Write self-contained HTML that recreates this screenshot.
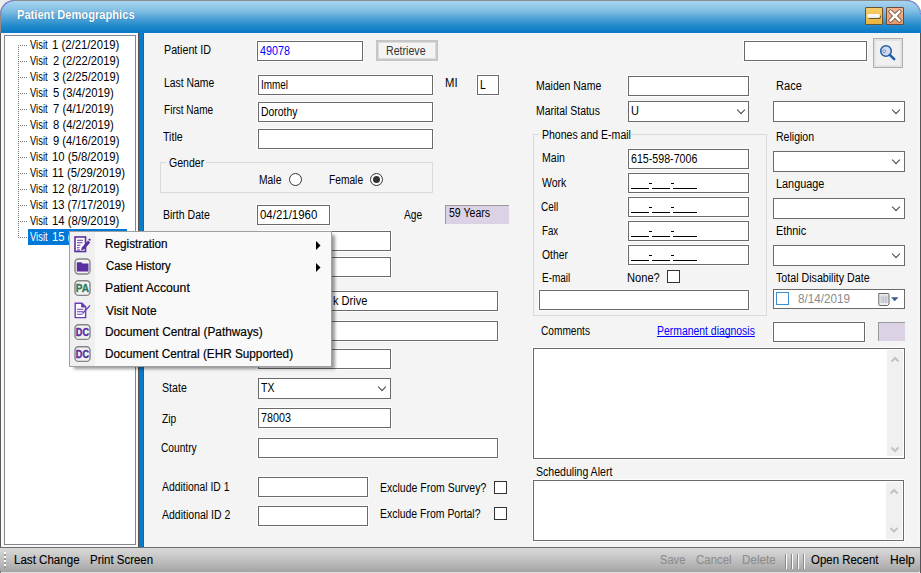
<!DOCTYPE html>
<html><head><meta charset="utf-8">
<style>
*{margin:0;padding:0;box-sizing:border-box}
html,body{width:921px;height:573px;overflow:hidden;background:#ececec;font-family:"Liberation Sans",sans-serif;font-size:12px;color:#000;position:relative}
.a{position:absolute}
.tx{position:absolute;white-space:pre;transform-origin:0 0}
.mtx{z-index:6;-webkit-text-stroke:0.18px #000}
.stx{-webkit-text-stroke:0.12px currentColor}
.ttl{text-shadow:0 0 1px rgba(20,60,100,.6)}
#win{left:0;top:20px;width:921px;height:553px;background:#f8f8f8;border-left:1px solid #5a5a5a;border-right:1px solid #555}

#title{left:0;top:0;width:921px;height:33px;border-left:1px solid #958a85;background:linear-gradient(#a6d5f0 0px,#96cae9 5px,#80bee3 10px,#5eabdb 15px,#3e9ad3 20px,#2189cb 25px,#0d7dc6 30px,#087ac5 32px);border-top:1px solid #8c8c8c;border-radius:14px 14px 0 0}
#tree{left:4px;top:35px;width:132px;height:510px;background:#fff;border:1px solid #828790}
#sepd{left:138px;top:33px;width:6px;height:514px;background:#555}
#sep{left:139px;top:33px;width:4px;height:514px;background:#0a79c8}
#form{left:144px;top:33px;width:775px;height:514px;background:#f4f4f4}
#status{left:0;top:547px;width:920px;height:26px;border-radius:0 0 3px 3px;background:linear-gradient(#d8d8d8 0,#d0d0d0 20%,#bababa 60%,#a4a4a4 95%,#dedede 96%);border-top:1px solid #6e6e6e}
.tb{position:absolute;background:#fff;border:1px solid #6a6a6a;box-shadow:0 0 0 1px #fdfdfd}
.cmb{position:absolute;background:#fff;border:1px solid #6a6a6a}
.chev{position:absolute;width:6px;height:6px;border-right:1px solid #444;border-bottom:1px solid #444;transform:rotate(45deg)}
.chk{position:absolute;width:13px;height:13px;border:1px solid #333;background:#fff}
.rad{position:absolute;width:13px;height:13px;border:1px solid #333;border-radius:50%;background:#fff}
.grp{position:absolute;border:1px solid #dadada}
.purp{position:absolute;background:#dcd2e6;border-top:1px solid #9a9a9a;border-left:1px solid #9a9a9a}
#menu{z-index:5;left:69px;top:231px;width:263px;height:136px;background:#f9f9f9;border:1px solid #a0a0a0;box-shadow:4px 3px 3px -1px rgba(0,0,0,.4)}
.mic{position:absolute}
.vl{position:absolute;left:18px;width:1px;background:repeating-linear-gradient(#777 0 1px,transparent 1px 2px)}
.hl{position:absolute;left:18px;width:9px;height:1px;background:repeating-linear-gradient(90deg,#777 0 1px,transparent 1px 2px)}
</style></head><body>
<div id="win" class="a"></div>
<div class="a" style="left:900px;top:0;width:21px;height:20px;background:#fff"></div>
<div id="title" class="a"></div>
<svg class="a" style="left:0;top:0" width="18" height="18"><path d="M0.6 14.5 A14 14 0 0 1 14.5 0.6" fill="none" stroke="#7472ee" stroke-width="1.1" stroke-dasharray="1.5 1"/></svg>
<svg class="a" style="left:903px;top:0" width="18" height="18"><path d="M3.5 0.6 A14 14 0 0 1 17.4 14.5" fill="none" stroke="#7472ee" stroke-width="1.1" stroke-dasharray="1.5 1"/></svg>

<!-- title buttons -->
<div class="a" style="left:865px;top:7px;width:18px;height:18px;background:linear-gradient(#f5cd6a,#ecb43e);border:1px solid #6b5531;border-radius:1px"></div>
<div class="a" style="left:867px;top:14px;width:13px;height:4px;background:linear-gradient(#fff,#e8e8e8);border-radius:2px;box-shadow:1px 1px 0 #6b5531"></div>
<div class="a" style="left:886px;top:7px;width:18px;height:18px;background:linear-gradient(#f4b58e,#e99a6c);border:1px solid #6b4a36;border-radius:1px"></div>
<svg class="a" style="left:886px;top:7px" width="18" height="18" viewBox="0 0 18 18"><path d="M4.5 4.5 L13.5 13.5 M13.5 4.5 L4.5 13.5" stroke="#5a3a2a" stroke-width="4" stroke-linecap="round"/><path d="M4.5 4.5 L13.5 13.5 M13.5 4.5 L4.5 13.5" stroke="#fff" stroke-width="2.6" stroke-linecap="round"/></svg>
<div id="tree" class="a"></div>
<div class="vl" style="top:45px;height:192px"></div>
<div class="hl" style="top:45px"></div>
<div class="hl" style="top:61px"></div>
<div class="hl" style="top:77px"></div>
<div class="hl" style="top:93px"></div>
<div class="hl" style="top:109px"></div>
<div class="hl" style="top:125px"></div>
<div class="hl" style="top:141px"></div>
<div class="hl" style="top:157px"></div>
<div class="hl" style="top:173px"></div>
<div class="hl" style="top:189px"></div>
<div class="hl" style="top:205px"></div>
<div class="hl" style="top:221px"></div>
<div class="hl" style="top:237px"></div>
<div class="a" style="left:28px;top:229px;width:99px;height:16px;background:#0078d7"></div>
<div id="sepd" class="a"></div>
<div id="sep" class="a"></div>
<div id="form" class="a"></div>

<!-- left column -->
<div class="tb" style="left:257px;top:41px;width:106px;height:20px"></div>
<div class="a" style="left:376px;top:40px;width:62px;height:21px;background:#f4f4f4;border:2px solid #c6c6c6;box-shadow:inset 0 0 0 1px #dcdcdc"></div>
<div class="tb" style="left:744px;top:41px;width:123px;height:20px"></div>
<div class="a" style="left:873px;top:38px;width:30px;height:30px;background:#f0f0f0;border:1px solid #adadad;box-shadow:inset 0 0 0 2px #e3e3e3"></div>
<svg class="a" style="left:879px;top:44px" width="18" height="18" viewBox="0 0 18 18"><circle cx="7" cy="7" r="5.3" fill="#d3dbee" stroke="#1f5fa6" stroke-width="1.5"/><circle cx="5.2" cy="7.2" r="1.4" fill="#fff" stroke="#4a7cc0" stroke-width="0.9"/><path d="M10.8 10.8L15.2 15.2" stroke="#1f5fa6" stroke-width="2.6" stroke-linecap="round"/></svg>

<div class="tb" style="left:258px;top:75px;width:175px;height:20px"></div>
<div class="tb" style="left:477px;top:75px;width:22px;height:20px"></div>
<div class="tb" style="left:258px;top:102px;width:175px;height:20px"></div>
<div class="tb" style="left:258px;top:129px;width:175px;height:20px"></div>
<div class="grp" style="left:160px;top:162px;width:273px;height:31px"></div>
<div class="a" style="left:166px;top:156px;width:40px;height:12px;background:#f4f4f4"></div>
<div class="rad" style="left:289px;top:173px"></div>
<div class="rad" style="left:370px;top:173px"></div>
<div class="a" style="left:373px;top:176px;width:7px;height:7px;border-radius:50%;background:#333"></div>
<div class="tb" style="left:257px;top:205px;width:73px;height:20px"></div>
<div class="purp" style="left:445px;top:205px;width:64px;height:19px"></div>
<div class="tb" style="left:258px;top:231px;width:133px;height:20px"></div>
<div class="tb" style="left:258px;top:257px;width:133px;height:20px"></div>
<div class="tb" style="left:258px;top:291px;width:240px;height:20px"></div>
<div class="tb" style="left:258px;top:321px;width:240px;height:20px"></div>
<div class="tb" style="left:258px;top:349px;width:133px;height:20px"></div>
<div class="cmb" style="left:258px;top:378px;width:133px;height:21px"></div>
<div class="chev" style="left:379px;top:384px"></div>
<div class="tb" style="left:258px;top:408px;width:133px;height:20px"></div>
<div class="tb" style="left:258px;top:438px;width:240px;height:20px"></div>
<div class="tb" style="left:258px;top:477px;width:110px;height:20px"></div>
<div class="tb" style="left:258px;top:506px;width:110px;height:20px"></div>
<div class="chk" style="left:494px;top:481px"></div>
<div class="chk" style="left:494px;top:507px"></div>

<!-- right column -->
<div class="tb" style="left:628px;top:76px;width:121px;height:20px"></div>
<div class="cmb" style="left:628px;top:101px;width:121px;height:21px"></div>
<div class="chev" style="left:738px;top:107px"></div>
<div class="grp" style="left:533px;top:134px;width:234px;height:182px"></div>
<div class="a" style="left:539px;top:128px;width:92px;height:12px;background:#f4f4f4"></div>
<div class="tb" style="left:628px;top:149px;width:121px;height:20px"></div>
<div class="tb" style="left:628px;top:173px;width:121px;height:20px"></div>
<div class="tb" style="left:628px;top:197px;width:121px;height:20px"></div>
<div class="tb" style="left:628px;top:221px;width:121px;height:20px"></div>
<div class="tb" style="left:628px;top:245px;width:121px;height:20px"></div>
<div class="a" style="left:631px;top:188px;width:18px;height:1px;background:#000"></div>
<div class="a" style="left:649px;top:183px;width:3px;height:1px;background:#000"></div>
<div class="a" style="left:652px;top:188px;width:18px;height:1px;background:#000"></div>
<div class="a" style="left:671px;top:183px;width:3px;height:1px;background:#000"></div>
<div class="a" style="left:673px;top:188px;width:24px;height:1px;background:#000"></div>
<div class="a" style="left:631px;top:212px;width:18px;height:1px;background:#000"></div>
<div class="a" style="left:649px;top:207px;width:3px;height:1px;background:#000"></div>
<div class="a" style="left:652px;top:212px;width:18px;height:1px;background:#000"></div>
<div class="a" style="left:671px;top:207px;width:3px;height:1px;background:#000"></div>
<div class="a" style="left:673px;top:212px;width:24px;height:1px;background:#000"></div>
<div class="a" style="left:631px;top:236px;width:18px;height:1px;background:#000"></div>
<div class="a" style="left:649px;top:231px;width:3px;height:1px;background:#000"></div>
<div class="a" style="left:652px;top:236px;width:18px;height:1px;background:#000"></div>
<div class="a" style="left:671px;top:231px;width:3px;height:1px;background:#000"></div>
<div class="a" style="left:673px;top:236px;width:24px;height:1px;background:#000"></div>
<div class="a" style="left:631px;top:260px;width:18px;height:1px;background:#000"></div>
<div class="a" style="left:649px;top:255px;width:3px;height:1px;background:#000"></div>
<div class="a" style="left:652px;top:260px;width:18px;height:1px;background:#000"></div>
<div class="a" style="left:671px;top:255px;width:3px;height:1px;background:#000"></div>
<div class="a" style="left:673px;top:260px;width:24px;height:1px;background:#000"></div>
<div class="chk" style="left:667px;top:270px"></div>
<div class="tb" style="left:539px;top:290px;width:210px;height:20px"></div>
<div class="cmb" style="left:773px;top:101px;width:132px;height:21px"></div>
<div class="chev" style="left:893px;top:107px"></div>
<div class="cmb" style="left:773px;top:151px;width:132px;height:21px"></div>
<div class="chev" style="left:893px;top:157px"></div>
<div class="cmb" style="left:773px;top:198px;width:132px;height:21px"></div>
<div class="chev" style="left:893px;top:204px"></div>
<div class="cmb" style="left:773px;top:245px;width:132px;height:21px"></div>
<div class="chev" style="left:893px;top:251px"></div>
<div class="cmb" style="left:773px;top:289px;width:132px;height:20px"></div>
<div class="a" style="left:776px;top:292px;width:13px;height:13px;border:1px solid #3c8fd6;background:#fff"></div>
<svg class="a" style="left:877px;top:292px" width="24" height="14" viewBox="0 0 24 14"><path d="M1.8 1.5h9.2a1 1 0 0 1 1 1v9.5l-1.5 1.5H2.8a1 1 0 0 1-1-1z" fill="#eef2f8" stroke="#6e625a" stroke-width="1"/><rect x="3.5" y="3.5" width="7" height="7.5" fill="#c2c7d0"/><path d="M4.5 4.5h1M7 4.5h1M9.5 4.5h0.5M4.5 7h1M7 7h1M9.5 7h0.5M4.5 9.5h1M7 9.5h1" stroke="#eef2f8" stroke-width="1"/><path d="M14 5.2h7.5l-3.75 4z" fill="#3b5a8a"/></svg>
<div class="tb" style="left:773px;top:322px;width:92px;height:20px"></div>
<div class="purp" style="left:878px;top:322px;width:27px;height:19px"></div>
<div class="tb" style="left:533px;top:348px;width:372px;height:111px"></div>
<div class="a" style="left:887px;top:350px;width:16px;height:106px;background:#f0f0f0"></div>


<div class="tb" style="left:533px;top:480px;width:371px;height:61px"></div>
<div class="a" style="left:886px;top:482px;width:16px;height:57px;background:#f0f0f0"></div>



<svg class="a" style="left:887px;top:350px" width="16" height="106"><path d="M4.5 11.5L8 8L11.5 11.5M4.5 97.5L8 101L11.5 97.5" fill="none" stroke="#c2c2c2" stroke-width="2"/></svg>
<svg class="a" style="left:886px;top:482px" width="16" height="57"><path d="M4.5 11.5L8 8L11.5 11.5M4.5 46L8 49.5L11.5 46" fill="none" stroke="#c2c2c2" stroke-width="2"/></svg>
<div id="status" class="a"></div>
<!-- status grips -->
<div class="a" style="left:4px;top:552px;width:2px;height:16px;background:repeating-linear-gradient(#fff 0 2px,#9a9a9a 2px 4px)"></div>
<div class="a" style="left:785px;top:554px;width:2px;height:15px;background:linear-gradient(90deg,#8a8a8a 50%,#fff 50%)"></div>
<div class="a" style="left:791px;top:554px;width:2px;height:15px;background:linear-gradient(90deg,#8a8a8a 50%,#fff 50%)"></div>
<div class="a" style="left:797px;top:554px;width:2px;height:15px;background:linear-gradient(90deg,#8a8a8a 50%,#fff 50%)"></div>
<div class="a" style="left:803px;top:554px;width:2px;height:15px;background:linear-gradient(90deg,#8a8a8a 50%,#fff 50%)"></div>

<!-- context menu -->
<div id="menu" class="a">
<div class="a" style="left:0;top:0;width:25px;height:134px;background:#f0f0f0"></div>
<svg class="mic" style="left:4px;top:4px" width="17" height="17" viewBox="0 0 17 17"><rect x="1" y="1" width="10.5" height="14.5" fill="#fff" stroke="#5a2ea0" stroke-width="1.6"/><path d="M3 4.2h6M3 6.7h5.5M3 9.2h3.5M3 11.7h2.5M3 14h3" stroke="#5a2ea0" stroke-width="1.1"/><path d="M7 14.2l0.8-2.8 6.2-7 2.2 2-6.2 7z" fill="#5a2ea0"/><path d="M14.2 3.6l1.3-1.2 1.5 1.4-1.2 1.3z" fill="#5a2ea0"/></svg>
<svg class="mic" style="left:4px;top:26px" width="17" height="17" viewBox="0 0 17 17"><rect x="1" y="1" width="15" height="15" rx="3.5" fill="#f2f2f2" stroke="#858585" stroke-width="1.4"/><path d="M2.8 4.2h4.6l1 1.2h6.1V13.6H2.8z" fill="#5a2ea0"/></svg>
<svg class="mic" style="left:4px;top:48px" width="17" height="17" viewBox="0 0 17 17"><rect x="1" y="0.8" width="15" height="14.6" rx="3.5" fill="#f2f2f2" stroke="#858585" stroke-width="1.4"/><text x="1.8" y="12" textLength="13.2" lengthAdjust="spacingAndGlyphs" font-family="Liberation Sans" font-weight="bold" font-size="10.5" fill="#2f7b5c" stroke="#2f7b5c" stroke-width="0.3">PA</text></svg>
<svg class="mic" style="left:4px;top:70px" width="17" height="17" viewBox="0 0 17 17"><path d="M1.2 1.2h6.8l3.6 3.6V15.6H1.2z" fill="#fff" stroke="#6a3cb8" stroke-width="1.4"/><path d="M7.6 1.2v3.8h4" fill="#6a3cb8" stroke="#6a3cb8" stroke-width="1"/><path d="M3 7.2h6.5M3 9.7h6.5M3 12.2h5.5" stroke="#6a3cb8" stroke-width="1.1"/><path d="M8.5 11.5l7.5-8" stroke="#6a3cb8" stroke-width="1.2"/></svg>
<svg class="mic" style="left:4px;top:92px" width="17" height="17" viewBox="0 0 17 17"><rect x="1" y="0.8" width="15" height="14.6" rx="3.5" fill="#f2f2f2" stroke="#858585" stroke-width="1.4"/><text x="1.8" y="12" textLength="13.2" lengthAdjust="spacingAndGlyphs" font-family="Liberation Sans" font-weight="bold" font-size="10.5" fill="#5a2ea0" stroke="#5a2ea0" stroke-width="0.4">DC</text></svg>
<svg class="mic" style="left:4px;top:114px" width="17" height="17" viewBox="0 0 17 17"><rect x="1" y="0.8" width="15" height="14.6" rx="3.5" fill="#f2f2f2" stroke="#858585" stroke-width="1.4"/><text x="1.8" y="12" textLength="13.2" lengthAdjust="spacingAndGlyphs" font-family="Liberation Sans" font-weight="bold" font-size="10.5" fill="#5a2ea0" stroke="#5a2ea0" stroke-width="0.4">DC</text></svg>
<svg class="a" style="left:246px;top:9px" width="5" height="9"><path d="M0 0l4.5 4.5L0 9z" fill="#000"/></svg>
<svg class="a" style="left:246px;top:31px" width="5" height="9"><path d="M0 0l4.5 4.5L0 9z" fill="#000"/></svg>
</div>
<div class="tx ttl" style="left:17.44px;top:8.00px;font-size:13px;line-height:13px;transform:scaleX(0.8566);color:#fff;font-weight:bold">Patient Demographics</div>
<div class="tx" style="left:30.00px;top:39.00px;font-size:12px;line-height:12px;transform:scaleX(0.7826)">Visit</div>
<div class="tx" style="left:52.06px;top:39.00px;font-size:12px;line-height:12px;transform:scaleX(0.9429)">1 (2/21/2019)</div>
<div class="tx" style="left:30.00px;top:55.00px;font-size:12px;line-height:12px;transform:scaleX(0.7826)">Visit</div>
<div class="tx" style="left:53.00px;top:55.00px;font-size:12px;line-height:12px;transform:scaleX(0.9296)">2 (2/22/2019)</div>
<div class="tx" style="left:30.00px;top:71.00px;font-size:12px;line-height:12px;transform:scaleX(0.7826)">Visit</div>
<div class="tx" style="left:53.00px;top:71.00px;font-size:12px;line-height:12px;transform:scaleX(0.9296)">3 (2/25/2019)</div>
<div class="tx" style="left:30.00px;top:87.00px;font-size:12px;line-height:12px;transform:scaleX(0.7826)">Visit</div>
<div class="tx" style="left:53.00px;top:87.00px;font-size:12px;line-height:12px;transform:scaleX(0.9375)">5 (3/4/2019)</div>
<div class="tx" style="left:30.00px;top:103.00px;font-size:12px;line-height:12px;transform:scaleX(0.7826)">Visit</div>
<div class="tx" style="left:53.00px;top:103.00px;font-size:12px;line-height:12px;transform:scaleX(0.9375)">7 (4/1/2019)</div>
<div class="tx" style="left:30.00px;top:119.00px;font-size:12px;line-height:12px;transform:scaleX(0.7826)">Visit</div>
<div class="tx" style="left:53.00px;top:119.00px;font-size:12px;line-height:12px;transform:scaleX(0.9375)">8 (4/2/2019)</div>
<div class="tx" style="left:30.00px;top:135.00px;font-size:12px;line-height:12px;transform:scaleX(0.7826)">Visit</div>
<div class="tx" style="left:53.00px;top:135.00px;font-size:12px;line-height:12px;transform:scaleX(0.9296)">9 (4/16/2019)</div>
<div class="tx" style="left:30.00px;top:151.00px;font-size:12px;line-height:12px;transform:scaleX(0.7826)">Visit</div>
<div class="tx" style="left:52.06px;top:151.00px;font-size:12px;line-height:12px;transform:scaleX(0.9429)">10 (5/8/2019)</div>
<div class="tx" style="left:30.00px;top:167.00px;font-size:12px;line-height:12px;transform:scaleX(0.7826)">Visit</div>
<div class="tx" style="left:52.05px;top:167.00px;font-size:12px;line-height:12px;transform:scaleX(0.9474)">11 (5/29/2019)</div>
<div class="tx" style="left:30.00px;top:183.00px;font-size:12px;line-height:12px;transform:scaleX(0.7826)">Visit</div>
<div class="tx" style="left:52.06px;top:183.00px;font-size:12px;line-height:12px;transform:scaleX(0.9429)">12 (8/1/2019)</div>
<div class="tx" style="left:30.00px;top:199.00px;font-size:12px;line-height:12px;transform:scaleX(0.7826)">Visit</div>
<div class="tx" style="left:52.06px;top:199.00px;font-size:12px;line-height:12px;transform:scaleX(0.9351)">13 (7/17/2019)</div>
<div class="tx" style="left:30.00px;top:215.00px;font-size:12px;line-height:12px;transform:scaleX(0.7826)">Visit</div>
<div class="tx" style="left:52.06px;top:215.00px;font-size:12px;line-height:12px;transform:scaleX(0.9429)">14 (8/9/2019)</div>
<div class="tx" style="left:30.00px;top:231.00px;font-size:12px;line-height:12px;transform:scaleX(0.7826);color:#fff">Visit</div>
<div class="tx" style="left:52.06px;top:231.00px;font-size:12px;line-height:12px;transform:scaleX(0.9351);color:#fff">15 (8/14/2019)</div>
<div class="tx" style="left:163.91px;top:44.00px;font-size:12px;line-height:12px;transform:scaleX(0.8922)">Patient ID</div>
<div class="tx" style="left:163.94px;top:77.00px;font-size:12px;line-height:12px;transform:scaleX(0.8649)">Last Name</div>
<div class="tx" style="left:163.96px;top:104.00px;font-size:12px;line-height:12px;transform:scaleX(0.8379)">First Name</div>
<div class="tx" style="left:163.20px;top:131.00px;font-size:12px;line-height:12px;transform:scaleX(0.8864)">Title</div>
<div class="tx" style="left:169.00px;top:157.00px;font-size:12px;line-height:12px;transform:scaleX(0.8800)">Gender</div>
<div class="tx" style="left:258.94px;top:174.00px;font-size:12px;line-height:12px;transform:scaleX(0.8600)">Male</div>
<div class="tx" style="left:328.95px;top:174.00px;font-size:12px;line-height:12px;transform:scaleX(0.8513)">Female</div>
<div class="tx" style="left:162.92px;top:209.00px;font-size:12px;line-height:12px;transform:scaleX(0.8769)">Birth Date</div>
<div class="tx" style="left:403.80px;top:209.00px;font-size:12px;line-height:12px;transform:scaleX(0.8476)">Age</div>
<div class="tx" style="left:449.30px;top:207.00px;font-size:12px;line-height:12px;transform:scaleX(0.8787)">59 Years</div>
<div class="tx" style="left:161.91px;top:382.00px;font-size:12px;line-height:12px;transform:scaleX(0.8852)">State</div>
<div class="tx" style="left:162.00px;top:413.00px;font-size:12px;line-height:12px;transform:scaleX(0.8471)">Zip</div>
<div class="tx" style="left:161.30px;top:442.00px;font-size:12px;line-height:12px;transform:scaleX(0.8476)">Country</div>
<div class="tx" style="left:162.40px;top:481.00px;font-size:12px;line-height:12px;transform:scaleX(0.8641)">Additional ID 1</div>
<div class="tx" style="left:162.40px;top:509.00px;font-size:12px;line-height:12px;transform:scaleX(0.8756)">Additional ID 2</div>
<div class="tx" style="left:379.92px;top:482.00px;font-size:12px;line-height:12px;transform:scaleX(0.8758)">Exclude From Survey?</div>
<div class="tx" style="left:379.93px;top:508.00px;font-size:12px;line-height:12px;transform:scaleX(0.8711)">Exclude From Portal?</div>
<div class="tx" style="left:444.86px;top:77.00px;font-size:12px;line-height:12px;transform:scaleX(0.9417)">MI</div>
<div class="tx" style="left:385.91px;top:45.00px;font-size:12px;line-height:12px;transform:scaleX(0.8864);color:#333">Retrieve</div>
<div class="tx" style="left:259.80px;top:45.00px;font-size:12px;line-height:12px;transform:scaleX(0.8970);color:#0000ff">49078</div>
<div class="tx" style="left:260.87px;top:79.00px;font-size:12px;line-height:12px;transform:scaleX(0.8258)">Immel</div>
<div class="tx" style="left:479.93px;top:79.00px;font-size:12px;line-height:12px;transform:scaleX(0.8700)">L</div>
<div class="tx" style="left:260.83px;top:106.00px;font-size:12px;line-height:12px;transform:scaleX(0.8659)">Dorothy</div>
<div class="tx" style="left:259.80px;top:209.00px;font-size:12px;line-height:12px;transform:scaleX(0.9550)">04/21/1960</div>
<div class="tx" style="left:333.30px;top:295.00px;font-size:12px;line-height:12px;transform:scaleX(0.9216)">k Drive</div>
<div class="tx" style="left:260.80px;top:382.00px;font-size:12px;line-height:12px;transform:scaleX(0.8700)">TX</div>
<div class="tx" style="left:260.80px;top:412.00px;font-size:12px;line-height:12px;transform:scaleX(0.8970)">78003</div>
<div class="tx" style="left:535.93px;top:80.00px;font-size:12px;line-height:12px;transform:scaleX(0.8730)">Maiden Name</div>
<div class="tx" style="left:535.93px;top:104.70px;font-size:12px;line-height:12px;transform:scaleX(0.8708)">Marital Status</div>
<div class="tx" style="left:630.89px;top:105.00px;font-size:12px;line-height:12px;transform:scaleX(0.9143)">U</div>
<div class="tx" style="left:541.92px;top:129.00px;font-size:12px;line-height:12px;transform:scaleX(0.8770)">Phones and E-mail</div>
<div class="tx" style="left:541.92px;top:152.00px;font-size:12px;line-height:12px;transform:scaleX(0.8800)">Main</div>
<div class="tx" style="left:630.80px;top:153.00px;font-size:12px;line-height:12px;transform:scaleX(0.8878)">615-598-7006</div>
<div class="tx" style="left:542.20px;top:177.00px;font-size:12px;line-height:12px;transform:scaleX(0.8750)">Work</div>
<div class="tx" style="left:541.40px;top:201.00px;font-size:12px;line-height:12px;transform:scaleX(0.8300)">Cell</div>
<div class="tx" style="left:541.89px;top:225.00px;font-size:12px;line-height:12px;transform:scaleX(0.8053)">Fax</div>
<div class="tx" style="left:541.80px;top:249.00px;font-size:12px;line-height:12px;transform:scaleX(0.8633)">Other</div>
<div class="tx" style="left:541.77px;top:272.00px;font-size:12px;line-height:12px;transform:scaleX(0.8303)">E-mail</div>
<div class="tx" style="left:626.87px;top:271.60px;font-size:12px;line-height:12px;transform:scaleX(0.9265)">None?</div>
<div class="tx" style="left:775.88px;top:80.00px;font-size:12px;line-height:12px;transform:scaleX(0.9222)">Race</div>
<div class="tx" style="left:775.92px;top:131.00px;font-size:12px;line-height:12px;transform:scaleX(0.8786)">Religion</div>
<div class="tx" style="left:775.89px;top:178.00px;font-size:12px;line-height:12px;transform:scaleX(0.9058)">Language</div>
<div class="tx" style="left:775.89px;top:225.00px;font-size:12px;line-height:12px;transform:scaleX(0.9062)">Ethnic</div>
<div class="tx" style="left:776.00px;top:272.00px;font-size:12px;line-height:12px;transform:scaleX(0.8886)">Total Disability Date</div>
<div class="tx" style="left:798.10px;top:293.00px;font-size:12px;line-height:12px;transform:scaleX(0.9736);color:#8a8a8a">8/14/2019</div>
<div class="tx" style="left:541.40px;top:325.00px;font-size:12px;line-height:12px;transform:scaleX(0.8448)">Comments</div>
<div class="tx" style="left:656.93px;top:325.00px;font-size:12px;line-height:12px;transform:scaleX(0.8679);color:#0000ff;text-decoration:underline;text-decoration-skip-ink:none">Permanent diagnosis</div>
<div class="tx" style="left:535.52px;top:466.00px;font-size:12px;line-height:12px;transform:scaleX(0.8802)">Scheduling Alert</div>
<div class="tx mtx" style="left:105.02px;top:238.00px;font-size:12px;line-height:12px;transform:scaleX(0.9778)">Registration</div>
<div class="tx mtx" style="left:106.00px;top:260.00px;font-size:12px;line-height:12px;transform:scaleX(0.9420)">Case History</div>
<div class="tx mtx" style="left:104.98px;top:282.00px;font-size:12px;line-height:12px;transform:scaleX(1.0169)">Patient Account</div>
<div class="tx mtx" style="left:106.00px;top:305.00px;font-size:12px;line-height:12px;transform:scaleX(0.9902)">Visit Note</div>
<div class="tx mtx" style="left:105.02px;top:326.00px;font-size:12px;line-height:12px;transform:scaleX(0.9849)">Document Central (Pathways)</div>
<div class="tx mtx" style="left:105.02px;top:348.00px;font-size:12px;line-height:12px;transform:scaleX(0.9791)">Document Central (EHR Supported)</div>
<div class="tx stx" style="left:14.24px;top:554.00px;font-size:12px;line-height:12px;transform:scaleX(0.9642)">Last Change</div>
<div class="tx stx" style="left:90.14px;top:554.00px;font-size:12px;line-height:12px;transform:scaleX(0.9554)">Print Screen</div>
<div class="tx stx" style="left:660.17px;top:554.00px;font-size:12px;line-height:12px;transform:scaleX(0.9269);color:#8d8d8d">Save</div>
<div class="tx stx" style="left:696.40px;top:554.00px;font-size:12px;line-height:12px;transform:scaleX(0.9541);color:#8d8d8d">Cancel</div>
<div class="tx stx" style="left:741.83px;top:554.00px;font-size:12px;line-height:12px;transform:scaleX(0.9706);color:#8d8d8d">Delete</div>
<div class="tx stx" style="left:811.10px;top:554.00px;font-size:12px;line-height:12px;transform:scaleX(0.9535)">Open Recent</div>
<div class="tx stx" style="left:889.50px;top:554.00px;font-size:12px;line-height:12px;transform:scaleX(1.0042)">Help</div>
</body></html>
